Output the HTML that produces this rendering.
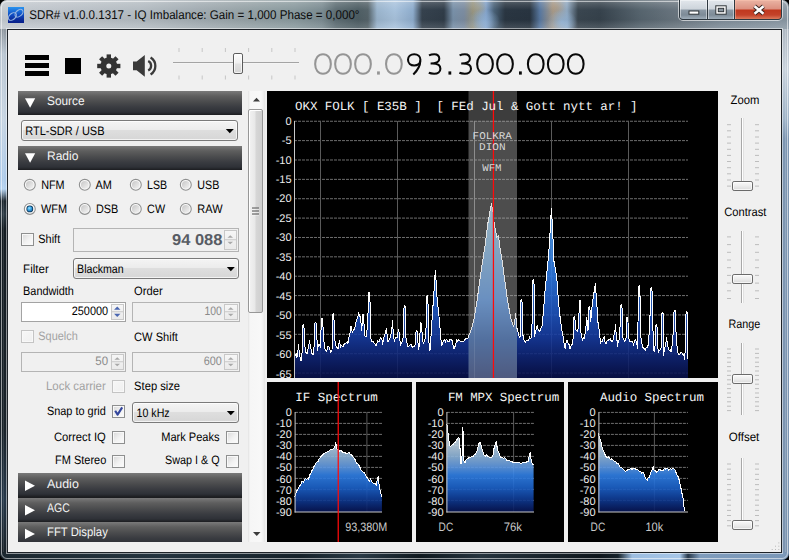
<!DOCTYPE html><html><head><meta charset="utf-8"><style>
html,body{margin:0;padding:0;background:#000;}
#r{position:relative;width:789px;height:560px;overflow:hidden;font-family:"Liberation Sans",sans-serif;}
#r>div{position:absolute;}
#r>div>div{position:absolute;}
svg{position:absolute;left:0;top:0;}
</style></head><body><div id="r">
<div style="left:0;top:0;width:789px;height:560px;border-radius:7px;overflow:hidden;background:#1b242c;"><div style="left:0px;top:0px;width:789px;height:29px;background:radial-gradient(ellipse 16px 12px at 484px 21px,rgba(150,184,222,.8),rgba(150,184,222,0)),radial-gradient(ellipse 10px 8px at 478px 8px,rgba(170,160,130,.5),rgba(170,160,130,0)),radial-gradient(ellipse 15px 12px at 562px 22px,rgba(150,186,224,.8),rgba(150,186,224,0)),radial-gradient(ellipse 9px 7px at 556px 7px,rgba(176,150,120,.5),rgba(176,150,120,0)),linear-gradient(90deg,#c4cad0 0px,#bec4ca 60px,#b4bcc2 140px,#a2acb2 200px,#98a4a8 240px,#8a9a9e 295px,#7c8c92 322px,#5e6e74 336px,#4e5e64 358px,#56646a 368px,#9ab4cc 377px,#a8c2dc 395px,#8eaccc 413px,#36424e 422px,#303c48 444px,#7890a8 453px,#7c8ca0 464px,#94927e 473px,#80a0c8 486px,#4a6278 494px,#2a3642 505px,#283440 530px,#5878a0 540px,#a49888 553px,#90a8c0 567px,#3a4650 578px,#36424c 600px,#56646e 640px,#6a7680 678px,#7c8a96 720px,#8a98a4 789px);"></div><div style="left:0px;top:0px;width:789px;height:29px;background:linear-gradient(180deg,rgba(255,255,255,.25) 0px,rgba(255,255,255,.12) 4px,rgba(255,255,255,.0) 10px,rgba(0,0,0,.04) 20px,rgba(255,255,255,.10) 27px);"></div><div style="left:0px;top:29px;width:7px;height:524px;background:linear-gradient(180deg,#8e969e 0px,#b9c6d2 25px,#c6d4e2 90px,#aecbea 150px,#b4d2f0 160px,#1c262e 172px,#2c3a44 185px,#141c22 200px,#1a232a 400px,#26384a 470px,#1a232a 520px);"></div><div style="left:782px;top:29px;width:7px;height:524px;background:linear-gradient(180deg,#aeb8c2 0px,#c8d2dc 40px,#9fb4c8 90px,#7d96b2 110px,#7b94b0 520px);"></div><div style="left:0px;top:553px;width:789px;height:7px;background:linear-gradient(90deg,#1c2830 0px,#24343f 160px,#16222a 300px,#2a3a46 360px,#101a20 420px,#26343e 480px,#0e161c 600px,#16222a 618px,#9cbde0 632px,#a6c6e8 680px,#27384a 688px,#7f9cbc 700px,#7b98b8 789px);"></div><div style="left:1px;top:1px;width:787px;height:558px;box-sizing:border-box;border:1px solid rgba(255,255,255,.55);border-radius:6px;"></div><div style="left:3px;top:29px;width:1px;height:523px;background:rgba(255,255,255,.12)"></div><div style="left:785px;top:29px;width:1px;height:523px;background:rgba(255,255,255,.18)"></div><div style="left:6px;top:28px;width:777px;height:526px;box-sizing:border-box;border:1px solid rgba(255,255,255,.5);"></div></div>
<div style="left:7px;top:29px;width:775px;height:524px;background:#1e2328;"></div>
<div style="left:8px;top:30px;width:773px;height:522px;background:#f0f0f0;"></div>
<div style="left:8px;top:7px;width:16px;height:16px;background:linear-gradient(180deg,#2a94f0,#0e4ac0 50%,#0a2a98 80%,#08208a);"></div>
<div style="left:678px;top:-1px;width:105px;height:22px;box-sizing:border-box;border:1px solid rgba(255,255,255,.6);border-top:none;border-radius:0 0 5px 5px;"></div>
<div style="left:679px;top:-1px;width:103px;height:21px;border:1px solid #2e3840;border-radius:0 0 4px 4px;box-sizing:border-box;overflow:hidden;background:#2e3840;"><div style="position:absolute;left:0;top:0;width:27px;height:20px;background:linear-gradient(180deg,#e2e7ec 0px,#cdd4db 9px,#8c99a5 10px,#7d8b97 15px,#a0aeba 19px);box-shadow:inset 0 0 0 1px rgba(255,255,255,.45);"></div><div style="position:absolute;left:28px;top:0;width:26px;height:20px;background:linear-gradient(180deg,#e2e7ec 0px,#cdd4db 9px,#8c99a5 10px,#7d8b97 15px,#a0aeba 19px);box-shadow:inset 0 0 0 1px rgba(255,255,255,.45);"></div><div style="position:absolute;left:55px;top:0;width:47px;height:20px;background:linear-gradient(180deg,#eab4a4 0px,#dc9080 9px,#c0381e 10px,#c4422a 15px,#dc7a5c 19px);box-shadow:inset 0 0 0 1px rgba(255,200,180,.45);"></div></div>
<div style="left:18px;top:91px;width:224px;height:24px;background:linear-gradient(180deg,#7a7a7a 0px,#5e5e5e 5px,#4a4b4d 11px,#3a3c41 16px,#2e3137 21px,#1c1d20 24px);"></div>
<div style="left:18px;top:146px;width:224px;height:24px;background:linear-gradient(180deg,#7a7a7a 0px,#5e5e5e 5px,#4a4b4d 11px,#3a3c41 16px,#2e3137 21px,#1c1d20 24px);"></div>
<div style="left:18px;top:473px;width:224px;height:24.6px;background:linear-gradient(180deg,#7a7a7a 0px,#5e5e5e 5px,#4a4b4d 11px,#3a3c41 16px,#2e3137 21px,#1c1d20 24px);"></div>
<div style="left:18px;top:497.6px;width:224px;height:24.4px;background:linear-gradient(180deg,#7a7a7a 0px,#5e5e5e 5px,#4a4b4d 11px,#3a3c41 16px,#2e3137 21px,#1c1d20 24px);"></div>
<div style="left:18px;top:522px;width:224px;height:20px;background:linear-gradient(180deg,#7a7a7a 0px,#5e5e5e 5px,#4a4b4d 11px,#3a3c41 16px,#2e3137 21px,#1c1d20 24px);background-size:100% 24px;"></div>
<div style="left:21px;top:120px;width:217px;height:21px;box-sizing:border-box;border:1px solid #7a7a7a;border-radius:3px;background:linear-gradient(180deg,#f4f4f4 0%,#ececec 45%,#dedede 50%,#d6d6d6 100%);box-shadow:inset 0 0 0 1px rgba(255,255,255,.7);"></div>
<div style="left:73px;top:258px;width:166px;height:21px;box-sizing:border-box;border:1px solid #7a7a7a;border-radius:3px;background:linear-gradient(180deg,#f4f4f4 0%,#ececec 45%,#dedede 50%,#d6d6d6 100%);box-shadow:inset 0 0 0 1px rgba(255,255,255,.7);"></div>
<div style="left:132px;top:402px;width:107px;height:21px;box-sizing:border-box;border:1px solid #7a7a7a;border-radius:3px;background:linear-gradient(180deg,#f4f4f4 0%,#ececec 45%,#dedede 50%,#d6d6d6 100%);box-shadow:inset 0 0 0 1px rgba(255,255,255,.7);"></div>
<div style="left:21px;top:233px;width:13px;height:13px;box-sizing:border-box;border:1px solid #8e8f8f;background:#f8f8f8;"></div>
<div style="left:23px;top:235px;width:9px;height:9px;background:linear-gradient(135deg,#dcdcdc 0%,#f2f2f2 55%,#fafafa 100%);"></div>
<div style="left:73px;top:228px;width:166px;height:23.5px;box-sizing:border-box;border:1px solid #b4b4b4;background:#f0f0f0;"></div>
<div style="left:223.5px;top:230px;width:13.5px;height:19.5px;box-sizing:border-box;border:1px solid #c8c8c8;background:linear-gradient(180deg,#f6f6f6,#eaeaea);"></div>
<div style="left:21px;top:302px;width:105px;height:19.5px;box-sizing:border-box;border:1px solid #a3a3a3;background:#ffffff;"></div>
<div style="left:110.5px;top:304px;width:13.5px;height:15.5px;box-sizing:border-box;border:1px solid #c8c8c8;background:linear-gradient(180deg,#f6f6f6,#eaeaea);"></div>
<div style="left:132px;top:302px;width:107.5px;height:19.5px;box-sizing:border-box;border:1px solid #b4b4b4;background:#f0f0f0;"></div>
<div style="left:224.0px;top:304px;width:13.5px;height:15.5px;box-sizing:border-box;border:1px solid #c8c8c8;background:linear-gradient(180deg,#f6f6f6,#eaeaea);"></div>
<div style="left:21px;top:330px;width:13px;height:13px;box-sizing:border-box;border:1px solid #c4c4c4;background:#f8f8f8;"></div>
<div style="left:23px;top:332px;width:9px;height:9px;background:linear-gradient(135deg,#f6f6f6,#f0f0f0);"></div>
<div style="left:21px;top:352px;width:105px;height:19.5px;box-sizing:border-box;border:1px solid #b4b4b4;background:#f0f0f0;"></div>
<div style="left:110.5px;top:354px;width:13.5px;height:15.5px;box-sizing:border-box;border:1px solid #c8c8c8;background:linear-gradient(180deg,#f6f6f6,#eaeaea);"></div>
<div style="left:132px;top:352px;width:107.5px;height:19.5px;box-sizing:border-box;border:1px solid #b4b4b4;background:#f0f0f0;"></div>
<div style="left:224.0px;top:354px;width:13.5px;height:15.5px;box-sizing:border-box;border:1px solid #c8c8c8;background:linear-gradient(180deg,#f6f6f6,#eaeaea);"></div>
<div style="left:112px;top:380px;width:13px;height:13px;box-sizing:border-box;border:1px solid #c4c4c4;background:#f8f8f8;"></div>
<div style="left:114px;top:382px;width:9px;height:9px;background:linear-gradient(135deg,#f6f6f6,#f0f0f0);"></div>
<div style="left:112px;top:405px;width:13px;height:13px;box-sizing:border-box;border:1px solid #8e8f8f;background:#f8f8f8;"></div>
<div style="left:114px;top:407px;width:9px;height:9px;background:linear-gradient(135deg,#dcdcdc 0%,#f2f2f2 55%,#fafafa 100%);"></div>
<div style="left:112px;top:431px;width:13px;height:13px;box-sizing:border-box;border:1px solid #8e8f8f;background:#f8f8f8;"></div>
<div style="left:114px;top:433px;width:9px;height:9px;background:linear-gradient(135deg,#dcdcdc 0%,#f2f2f2 55%,#fafafa 100%);"></div>
<div style="left:226px;top:431px;width:13px;height:13px;box-sizing:border-box;border:1px solid #8e8f8f;background:#f8f8f8;"></div>
<div style="left:228px;top:433px;width:9px;height:9px;background:linear-gradient(135deg,#dcdcdc 0%,#f2f2f2 55%,#fafafa 100%);"></div>
<div style="left:112px;top:455px;width:13px;height:13px;box-sizing:border-box;border:1px solid #8e8f8f;background:#f8f8f8;"></div>
<div style="left:114px;top:457px;width:9px;height:9px;background:linear-gradient(135deg,#dcdcdc 0%,#f2f2f2 55%,#fafafa 100%);"></div>
<div style="left:226px;top:455px;width:13px;height:13px;box-sizing:border-box;border:1px solid #8e8f8f;background:#f8f8f8;"></div>
<div style="left:228px;top:457px;width:9px;height:9px;background:linear-gradient(135deg,#dcdcdc 0%,#f2f2f2 55%,#fafafa 100%);"></div>
<div style="left:248px;top:91px;width:17px;height:451px;background:#f0f0f0;"></div>
<div style="left:248px;top:91px;width:17px;height:451px;background:linear-gradient(90deg,#e2e2e2 0px,#f6f6f6 2px,#f8f8f8 13px,#ececec 16px,#e4e4e4 17px);"></div>
<div style="left:248px;top:109px;width:15px;height:204px;box-sizing:border-box;border:1px solid #979797;border-radius:2px;background:linear-gradient(90deg,#f2f2f2 0%,#e8e8e8 45%,#d6d6d6 55%,#cfcfcf 100%);box-shadow:inset 1px 1px 0 #fff;"></div>
<div style="left:267px;top:91px;width:451px;height:287px;background:#000;"></div>
<div style="left:267px;top:382px;width:145px;height:160px;background:#000;"></div>
<div style="left:416px;top:382px;width:148px;height:160px;background:#000;"></div>
<div style="left:568px;top:382px;width:150px;height:160px;background:#000;"></div>
<svg width="789" height="560" viewBox="0 0 789 560" text-rendering="geometricPrecision">
<ellipse cx="12.4" cy="16.5" rx="4.6" ry="3.0" transform="rotate(-42 12.4 16.5)" stroke="#98b6e0" stroke-width="1.1" fill="none"/>
<ellipse cx="19.0" cy="13.2" rx="4.6" ry="3.0" transform="rotate(-42 19.0 13.2)" stroke="#98b6e0" stroke-width="1.1" fill="none"/>
<text xml:space="preserve" x="29.30" y="18.75" font-family="Liberation Sans" font-size="12.6" fill="#0c0c0c" font-weight="normal" text-anchor="start" textLength="330.20" lengthAdjust="spacingAndGlyphs" >SDR# v1.0.0.1317 - IQ Imbalance: Gain = 1,000 Phase = 0,000°</text>
<rect x="689" y="11" width="9.8" height="3.2" fill="#fff" stroke="#2e3438" stroke-width="1"/>
<rect x="715.8" y="5.8" width="10.4" height="8.4" fill="#fff" stroke="#2e3438" stroke-width="1"/>
<rect x="718.3" y="8.3" width="5.4" height="3.4" fill="#8a96a0" stroke="#2e3438" stroke-width="1"/>
<path d="M754.5,6.3 L763.5,13.7 M763.5,6.3 L754.5,13.7" stroke="#3a2420" stroke-width="4.4"/>
<path d="M754.5,6.3 L763.5,13.7 M763.5,6.3 L754.5,13.7" stroke="#fff" stroke-width="2.5"/>
<rect x="25" y="55" width="24" height="5" fill="#000"/><rect x="25" y="63" width="24" height="5" fill="#000"/><rect x="25" y="71" width="24" height="5" fill="#000"/>
<rect x="65" y="58" width="16" height="16" fill="#000"/>
<circle cx="108.8" cy="66.0" r="8.4" fill="#333"/><rect x="106.6" y="54.4" width="4.4" height="6" fill="#333" transform="rotate(0 108.8 66.0)"/><rect x="106.6" y="54.4" width="4.4" height="6" fill="#333" transform="rotate(45 108.8 66.0)"/><rect x="106.6" y="54.4" width="4.4" height="6" fill="#333" transform="rotate(90 108.8 66.0)"/><rect x="106.6" y="54.4" width="4.4" height="6" fill="#333" transform="rotate(135 108.8 66.0)"/><rect x="106.6" y="54.4" width="4.4" height="6" fill="#333" transform="rotate(180 108.8 66.0)"/><rect x="106.6" y="54.4" width="4.4" height="6" fill="#333" transform="rotate(225 108.8 66.0)"/><rect x="106.6" y="54.4" width="4.4" height="6" fill="#333" transform="rotate(270 108.8 66.0)"/><rect x="106.6" y="54.4" width="4.4" height="6" fill="#333" transform="rotate(315 108.8 66.0)"/><circle cx="108.8" cy="66.0" r="2.5" fill="#f0f0f0"/>
<path d="M133,61.5 L136.6,61.5 L144.8,54.9 L144.8,76.8 L136.6,70.2 L133,70.2 Z" fill="#3a3a3a"/>
<path d="M148.2,60.9 A5.4,5.4 0 0 1 148.2,70.5" stroke="#3a3a3a" stroke-width="2.3" fill="none"/>
<path d="M150.6,57.6 A10.0,10.0 0 0 1 150.6,74.6" stroke="#3a3a3a" stroke-width="2.3" fill="none"/>
<rect x="173" y="62" width="126" height="1.2" fill="#a4a4a4"/><rect x="173" y="63.2" width="126" height="0.8" fill="#fff" opacity=".8"/>
<rect x="178.5" y="48" width="1" height="4" fill="#c6c6c6"/><rect x="178.5" y="75.5" width="1" height="4" fill="#c6c6c6"/>
<rect x="201.7" y="48" width="1" height="4" fill="#c6c6c6"/><rect x="201.7" y="75.5" width="1" height="4" fill="#c6c6c6"/>
<rect x="224.9" y="48" width="1" height="4" fill="#c6c6c6"/><rect x="224.9" y="75.5" width="1" height="4" fill="#c6c6c6"/>
<rect x="248.1" y="48" width="1" height="4" fill="#c6c6c6"/><rect x="248.1" y="75.5" width="1" height="4" fill="#c6c6c6"/>
<rect x="271.3" y="48" width="1" height="4" fill="#c6c6c6"/><rect x="271.3" y="75.5" width="1" height="4" fill="#c6c6c6"/>
<rect x="294.5" y="48" width="1" height="4" fill="#c6c6c6"/><rect x="294.5" y="75.5" width="1" height="4" fill="#c6c6c6"/>
<defs><linearGradient id="thv" x1="0" y1="0" x2="0" y2="1"><stop offset="0" stop-color="#fbfbfb"/><stop offset="0.5" stop-color="#ececec"/><stop offset="1" stop-color="#d8d8d8"/></linearGradient><linearGradient id="thh" x1="0" y1="0" x2="0" y2="1"><stop offset="0" stop-color="#fdfdfd"/><stop offset="0.45" stop-color="#f0f0f0"/><stop offset="0.55" stop-color="#e0e0e0"/><stop offset="1" stop-color="#d4d4d4"/></linearGradient></defs>
<rect x="233.5" y="53.5" width="9" height="20" rx="1.6" fill="url(#thh)" stroke="#5a5a5a" stroke-width="1"/><rect x="234.5" y="54.5" width="7" height="18" rx="1" fill="none" stroke="#fff" stroke-opacity=".7" stroke-width="1"/>
<path d="M323.0,54.2 C327.71,54.2 330.85,58.1 330.85,63.95 C330.85,69.8 327.71,73.7 323.0,73.7 C318.29,73.7 315.15,69.8 315.15,63.95 C315.15,58.1 318.29,54.2 323.0,54.2 Z" fill="none" stroke="#959595" stroke-width="2.05"/>
<path d="M343.0,54.2 C347.71,54.2 350.85,58.1 350.85,63.95 C350.85,69.8 347.71,73.7 343.0,73.7 C338.29,73.7 335.15,69.8 335.15,63.95 C335.15,58.1 338.29,54.2 343.0,54.2 Z" fill="none" stroke="#959595" stroke-width="2.05"/>
<path d="M363.0,54.2 C367.71,54.2 370.85,58.1 370.85,63.95 C370.85,69.8 367.71,73.7 363.0,73.7 C358.29,73.7 355.15,69.8 355.15,63.95 C355.15,58.1 358.29,54.2 363.0,54.2 Z" fill="none" stroke="#959595" stroke-width="2.05"/>
<rect x="377.05" y="71.4" width="2.8" height="3.2" fill="#959595"/>
<path d="M393.9,54.2 C398.60999999999996,54.2 401.75,58.1 401.75,63.95 C401.75,69.8 398.60999999999996,73.7 393.9,73.7 C389.19,73.7 386.04999999999995,69.8 386.04999999999995,63.95 C386.04999999999995,58.1 389.19,54.2 393.9,54.2 Z" fill="none" stroke="#959595" stroke-width="2.05"/>
<path d="M414.2,54.2 C417.796,54.2 420.4,56.573 420.4,59.85 C420.4,63.127 417.796,65.5 414.2,65.5 C410.604,65.5 408.0,63.127 408.0,59.85 C408.0,56.573 410.604,54.2 414.2,54.2 Z" fill="none" stroke="#080808" stroke-width="2.05"/>
<path d="M420.34999999999997,60.6 C420.2,66.2 417.4,70.6 413.3,74.4" fill="none" stroke="#080808" stroke-width="2.05"/>
<path d="M429.00,55.4 C430.80,54.5 432.60,54.2 434.30,54.2 C437.60,54.2 439.30,56.1 439.30,58.8 C439.30,61.7 437.00,63.55 430.60,63.55 M432.50,63.55 C438.10,63.55 440.40,65.6 440.40,68.7 C440.40,71.8 437.80,73.7 434.20,73.7 C432.00,73.7 430.20,73.4 428.80,72.8" fill="none" stroke="#080808" stroke-width="2.05"/>
<rect x="448.45" y="71.4" width="2.8" height="3.2" fill="#080808"/>
<path d="M459.60,55.4 C461.40,54.5 463.20,54.2 464.90,54.2 C468.20,54.2 469.90,56.1 469.90,58.8 C469.90,61.7 467.60,63.55 461.20,63.55 M463.10,63.55 C468.70,63.55 471.00,65.6 471.00,68.7 C471.00,71.8 468.40,73.7 464.80,73.7 C462.60,73.7 460.80,73.4 459.40,72.8" fill="none" stroke="#080808" stroke-width="2.05"/>
<path d="M485.0,54.2 C489.71,54.2 492.85,58.1 492.85,63.95 C492.85,69.8 489.71,73.7 485.0,73.7 C480.29,73.7 477.15,69.8 477.15,63.95 C477.15,58.1 480.29,54.2 485.0,54.2 Z" fill="none" stroke="#080808" stroke-width="2.05"/>
<path d="M505.0,54.2 C509.71,54.2 512.85,58.1 512.85,63.95 C512.85,69.8 509.71,73.7 505.0,73.7 C500.29,73.7 497.15,69.8 497.15,63.95 C497.15,58.1 500.29,54.2 505.0,54.2 Z" fill="none" stroke="#080808" stroke-width="2.05"/>
<rect x="519.0" y="71.4" width="2.8" height="3.2" fill="#080808"/>
<path d="M535.75,54.2 C540.46,54.2 543.6,58.1 543.6,63.95 C543.6,69.8 540.46,73.7 535.75,73.7 C531.04,73.7 527.9,69.8 527.9,63.95 C527.9,58.1 531.04,54.2 535.75,54.2 Z" fill="none" stroke="#080808" stroke-width="2.05"/>
<path d="M555.75,54.2 C560.46,54.2 563.6,58.1 563.6,63.95 C563.6,69.8 560.46,73.7 555.75,73.7 C551.04,73.7 547.9,69.8 547.9,63.95 C547.9,58.1 551.04,54.2 555.75,54.2 Z" fill="none" stroke="#080808" stroke-width="2.05"/>
<path d="M575.75,54.2 C580.46,54.2 583.6,58.1 583.6,63.95 C583.6,69.8 580.46,73.7 575.75,73.7 C571.04,73.7 567.9,69.8 567.9,63.95 C567.9,58.1 571.04,54.2 575.75,54.2 Z" fill="none" stroke="#080808" stroke-width="2.05"/>
<path d="M25,98.3 L35.2,98.3 L30.1,107.8 Z" fill="#fff"/>
<text xml:space="preserve" x="47.00" y="105.00" font-family="Liberation Sans" font-size="12.4" fill="#f4f4f4" font-weight="normal" text-anchor="start" textLength="37.60" lengthAdjust="spacingAndGlyphs" >Source</text>
<path d="M25,153.3 L35.2,153.3 L30.1,162.8 Z" fill="#fff"/>
<text xml:space="preserve" x="47.00" y="159.70" font-family="Liberation Sans" font-size="12.4" fill="#f4f4f4" font-weight="normal" text-anchor="start" textLength="31.40" lengthAdjust="spacingAndGlyphs" >Radio</text>
<path d="M25,480.5 L35,485.7 L25,490.9 Z" fill="#fff"/>
<text xml:space="preserve" x="47.00" y="487.90" font-family="Liberation Sans" font-size="12.4" fill="#f4f4f4" font-weight="normal" text-anchor="start" textLength="31.80" lengthAdjust="spacingAndGlyphs" >Audio</text>
<path d="M25,505.1 L35,510.3 L25,515.5 Z" fill="#fff"/>
<text xml:space="preserve" x="47.00" y="511.90" font-family="Liberation Sans" font-size="12.4" fill="#f4f4f4" font-weight="normal" text-anchor="start" textLength="22.80" lengthAdjust="spacingAndGlyphs" >AGC</text>
<path d="M25,528.7 L35,533.9 L25,539.1 Z" fill="#fff"/>
<text xml:space="preserve" x="47.00" y="535.70" font-family="Liberation Sans" font-size="12.4" fill="#f4f4f4" font-weight="normal" text-anchor="start" textLength="60.80" lengthAdjust="spacingAndGlyphs" >FFT Display</text>
<path d="M225.8,128.9 L233.8,128.9 L229.8,133.20000000000002 Z" fill="#000"/>
<text xml:space="preserve" x="25.30" y="135.00" font-family="Liberation Sans" font-size="12.2" fill="#000" font-weight="normal" text-anchor="start" textLength="79.20" lengthAdjust="spacingAndGlyphs" >RTL-SDR / USB</text>
<path d="M226.8,266.9 L234.8,266.9 L230.8,271.2 Z" fill="#000"/>
<text xml:space="preserve" x="77.10" y="272.60" font-family="Liberation Sans" font-size="12.2" fill="#000" font-weight="normal" text-anchor="start" textLength="46.50" lengthAdjust="spacingAndGlyphs" >Blackman</text>
<path d="M226.8,410.9 L234.8,410.9 L230.8,415.2 Z" fill="#000"/>
<text xml:space="preserve" x="136.60" y="417.00" font-family="Liberation Sans" font-size="12.2" fill="#000" font-weight="normal" text-anchor="start" textLength="33.00" lengthAdjust="spacingAndGlyphs" >10 kHz</text>
<defs><linearGradient id="runs" x1="0" y1="0" x2="1" y2="1"><stop offset="0" stop-color="#c6c6c6"/><stop offset="1" stop-color="#f4f4f4"/></linearGradient><radialGradient id="rsel" cx="0.4" cy="0.35" r="0.7"><stop offset="0" stop-color="#a0e4ff"/><stop offset="0.5" stop-color="#3aa6e6"/><stop offset="1" stop-color="#1a6aaa"/></radialGradient></defs>
<circle cx="29.799999999999997" cy="184.8" r="5.45" fill="#fbfbfb" stroke="#8f9090" stroke-width="1.1"/>
<circle cx="29.799999999999997" cy="184.8" r="3.9" fill="url(#runs)"/>
<text xml:space="preserve" x="41.20" y="189.00" font-family="Liberation Sans" font-size="12.2" fill="#000" font-weight="normal" text-anchor="start" textLength="23.40" lengthAdjust="spacingAndGlyphs" >NFM</text>
<circle cx="84.80000000000001" cy="184.8" r="5.45" fill="#fbfbfb" stroke="#8f9090" stroke-width="1.1"/>
<circle cx="84.80000000000001" cy="184.8" r="3.9" fill="url(#runs)"/>
<text xml:space="preserve" x="95.60" y="189.00" font-family="Liberation Sans" font-size="12.2" fill="#000" font-weight="normal" text-anchor="start" textLength="16.30" lengthAdjust="spacingAndGlyphs" >AM</text>
<circle cx="135.8" cy="184.8" r="5.45" fill="#fbfbfb" stroke="#8f9090" stroke-width="1.1"/>
<circle cx="135.8" cy="184.8" r="3.9" fill="url(#runs)"/>
<text xml:space="preserve" x="147.10" y="189.00" font-family="Liberation Sans" font-size="12.2" fill="#000" font-weight="normal" text-anchor="start" textLength="20.00" lengthAdjust="spacingAndGlyphs" >LSB</text>
<circle cx="185.8" cy="184.8" r="5.45" fill="#fbfbfb" stroke="#8f9090" stroke-width="1.1"/>
<circle cx="185.8" cy="184.8" r="3.9" fill="url(#runs)"/>
<text xml:space="preserve" x="197.30" y="189.00" font-family="Liberation Sans" font-size="12.2" fill="#000" font-weight="normal" text-anchor="start" textLength="22.00" lengthAdjust="spacingAndGlyphs" >USB</text>
<circle cx="29.799999999999997" cy="208.9" r="5.45" fill="#fbfbfb" stroke="#8f9090" stroke-width="1.1"/>
<circle cx="29.799999999999997" cy="208.9" r="3.4" fill="#0d3454"/><circle cx="29.799999999999997" cy="208.9" r="2.6" fill="url(#rsel)"/>
<text xml:space="preserve" x="40.90" y="212.60" font-family="Liberation Sans" font-size="12.2" fill="#000" font-weight="normal" text-anchor="start" textLength="26.10" lengthAdjust="spacingAndGlyphs" >WFM</text>
<circle cx="84.80000000000001" cy="208.9" r="5.45" fill="#fbfbfb" stroke="#8f9090" stroke-width="1.1"/>
<circle cx="84.80000000000001" cy="208.9" r="3.9" fill="url(#runs)"/>
<text xml:space="preserve" x="96.00" y="212.60" font-family="Liberation Sans" font-size="12.2" fill="#000" font-weight="normal" text-anchor="start" textLength="22.30" lengthAdjust="spacingAndGlyphs" >DSB</text>
<circle cx="135.8" cy="208.9" r="5.45" fill="#fbfbfb" stroke="#8f9090" stroke-width="1.1"/>
<circle cx="135.8" cy="208.9" r="3.9" fill="url(#runs)"/>
<text xml:space="preserve" x="147.10" y="212.60" font-family="Liberation Sans" font-size="12.2" fill="#000" font-weight="normal" text-anchor="start" textLength="18.00" lengthAdjust="spacingAndGlyphs" >CW</text>
<circle cx="185.8" cy="208.9" r="5.45" fill="#fbfbfb" stroke="#8f9090" stroke-width="1.1"/>
<circle cx="185.8" cy="208.9" r="3.9" fill="url(#runs)"/>
<text xml:space="preserve" x="197.30" y="212.60" font-family="Liberation Sans" font-size="12.2" fill="#000" font-weight="normal" text-anchor="start" textLength="25.20" lengthAdjust="spacingAndGlyphs" >RAW</text>
<text xml:space="preserve" x="38.30" y="242.80" font-family="Liberation Sans" font-size="12.2" fill="#000" font-weight="normal" text-anchor="start" textLength="21.90" lengthAdjust="spacingAndGlyphs" >Shift</text>
<rect x="224.5" y="239.25" width="11.5" height="1" fill="#c8c8c8"/>
<path d="M227.45,237.75 L233.05,237.75 L230.25,235.15 Z" fill="#a8a8a8"/>
<path d="M227.45,241.75 L233.05,241.75 L230.25,244.35 Z" fill="#a8a8a8"/>
<text xml:space="preserve" x="172.00" y="244.80" font-family="Liberation Sans" font-size="15.8" fill="#585c64" font-weight="bold" text-anchor="start" textLength="50.40" lengthAdjust="spacingAndGlyphs" >94 088</text>
<text xml:space="preserve" x="23.10" y="272.60" font-family="Liberation Sans" font-size="12.2" fill="#000" font-weight="normal" text-anchor="start" textLength="25.70" lengthAdjust="spacingAndGlyphs" >Filter</text>
<text xml:space="preserve" x="23.10" y="294.90" font-family="Liberation Sans" font-size="12.2" fill="#000" font-weight="normal" text-anchor="start" textLength="50.80" lengthAdjust="spacingAndGlyphs" >Bandwidth</text>
<text xml:space="preserve" x="134.10" y="294.90" font-family="Liberation Sans" font-size="12.2" fill="#000" font-weight="normal" text-anchor="start" textLength="28.50" lengthAdjust="spacingAndGlyphs" >Order</text>
<rect x="111.5" y="311.25" width="11.5" height="1" fill="#c8c8c8"/>
<path d="M114.05,309.75 L120.45,309.75 L117.25,306.55 Z" fill="#4a66b0"/>
<path d="M114.05,313.75 L120.45,313.75 L117.25,316.95 Z" fill="#4a66b0"/>
<text xml:space="preserve" x="71.70" y="314.70" font-family="Liberation Sans" font-size="12.2" fill="#000" font-weight="normal" text-anchor="start" textLength="36.40" lengthAdjust="spacingAndGlyphs" >250000</text>
<rect x="225.0" y="311.25" width="11.5" height="1" fill="#c8c8c8"/>
<path d="M227.95,309.75 L233.55,309.75 L230.75,307.15 Z" fill="#a8a8a8"/>
<path d="M227.95,313.75 L233.55,313.75 L230.75,316.35 Z" fill="#a8a8a8"/>
<text xml:space="preserve" x="204.50" y="314.70" font-family="Liberation Sans" font-size="12.2" fill="#8a8a8a" font-weight="normal" text-anchor="start" textLength="17.40" lengthAdjust="spacingAndGlyphs" >100</text>
<text xml:space="preserve" x="38.30" y="340.20" font-family="Liberation Sans" font-size="12.2" fill="#a2a2a2" font-weight="normal" text-anchor="start" textLength="39.40" lengthAdjust="spacingAndGlyphs" >Squelch</text>
<text xml:space="preserve" x="134.10" y="340.70" font-family="Liberation Sans" font-size="12.2" fill="#000" font-weight="normal" text-anchor="start" textLength="43.70" lengthAdjust="spacingAndGlyphs" >CW Shift</text>
<rect x="111.5" y="361.25" width="11.5" height="1" fill="#c8c8c8"/>
<path d="M114.45,359.75 L120.05,359.75 L117.25,357.15 Z" fill="#a8a8a8"/>
<path d="M114.45,363.75 L120.05,363.75 L117.25,366.35 Z" fill="#a8a8a8"/>
<text xml:space="preserve" x="95.30" y="364.80" font-family="Liberation Sans" font-size="12.2" fill="#8a8a8a" font-weight="normal" text-anchor="start" textLength="12.80" lengthAdjust="spacingAndGlyphs" >50</text>
<rect x="225.0" y="361.25" width="11.5" height="1" fill="#c8c8c8"/>
<path d="M227.95,359.75 L233.55,359.75 L230.75,357.15 Z" fill="#a8a8a8"/>
<path d="M227.95,363.75 L233.55,363.75 L230.75,366.35 Z" fill="#a8a8a8"/>
<text xml:space="preserve" x="203.80" y="364.80" font-family="Liberation Sans" font-size="12.2" fill="#8a8a8a" font-weight="normal" text-anchor="start" textLength="18.10" lengthAdjust="spacingAndGlyphs" >600</text>
<text xml:space="preserve" x="45.90" y="389.60" font-family="Liberation Sans" font-size="12.2" fill="#a2a2a2" font-weight="normal" text-anchor="start" textLength="59.90" lengthAdjust="spacingAndGlyphs" >Lock carrier</text>
<text xml:space="preserve" x="134.10" y="390.40" font-family="Liberation Sans" font-size="12.2" fill="#000" font-weight="normal" text-anchor="start" textLength="46.00" lengthAdjust="spacingAndGlyphs" >Step size</text>
<text xml:space="preserve" x="46.90" y="414.80" font-family="Liberation Sans" font-size="12.2" fill="#000" font-weight="normal" text-anchor="start" textLength="58.90" lengthAdjust="spacingAndGlyphs" >Snap to grid</text>
<path d="M115.2,410.8 L117.6,414.6 L122.2,407.4" stroke="#34469c" stroke-width="2.1" fill="none" stroke-linejoin="round"/>
<text xml:space="preserve" x="53.90" y="440.60" font-family="Liberation Sans" font-size="12.2" fill="#000" font-weight="normal" text-anchor="start" textLength="51.90" lengthAdjust="spacingAndGlyphs" >Correct IQ</text>
<text xml:space="preserve" x="161.20" y="440.60" font-family="Liberation Sans" font-size="12.2" fill="#000" font-weight="normal" text-anchor="start" textLength="58.40" lengthAdjust="spacingAndGlyphs" >Mark Peaks</text>
<text xml:space="preserve" x="55.00" y="464.20" font-family="Liberation Sans" font-size="12.2" fill="#000" font-weight="normal" text-anchor="start" textLength="51.30" lengthAdjust="spacingAndGlyphs" >FM Stereo</text>
<text xml:space="preserve" x="165.00" y="464.20" font-family="Liberation Sans" font-size="12.2" fill="#000" font-weight="normal" text-anchor="start" textLength="54.60" lengthAdjust="spacingAndGlyphs" >Swap I &amp; Q</text>
<path d="M253,101.5 L260,101.5 L256.5,97.8 Z" fill="#3c3c3c"/>
<path d="M253,532 L260.5,532 L256.75,536 Z" fill="#3c3c3c"/>
<rect x="252" y="207.5" width="7" height="1.2" fill="#555"/><rect x="252" y="208.7" width="7" height="0.8" fill="#fff" opacity=".7"/>
<rect x="252" y="210.5" width="7" height="1.2" fill="#555"/><rect x="252" y="211.7" width="7" height="0.8" fill="#fff" opacity=".7"/>
<rect x="252" y="213.5" width="7" height="1.2" fill="#555"/><rect x="252" y="214.7" width="7" height="0.8" fill="#fff" opacity=".7"/>
<defs>
<linearGradient id="gm" x1="0" y1="121" x2="0" y2="378" gradientUnits="userSpaceOnUse">
<stop offset="0" stop-color="#e4ecf4"/><stop offset="0.30" stop-color="#84b2e4"/><stop offset="0.45" stop-color="#4490e6"/>
<stop offset="0.60" stop-color="#2e7ae4"/><stop offset="0.74" stop-color="#2058c4"/><stop offset="0.84" stop-color="#173ca2"/><stop offset="0.92" stop-color="#0f2576"/><stop offset="1" stop-color="#08104a"/></linearGradient>
<linearGradient id="gs" x1="0" y1="412" x2="0" y2="512" gradientUnits="userSpaceOnUse">
<stop offset="0" stop-color="#ffffff"/><stop offset="0.33" stop-color="#bbd1e3"/><stop offset="0.44" stop-color="#90b6da"/><stop offset="0.54" stop-color="#649ce3"/><stop offset="0.63" stop-color="#3181e7"/><stop offset="0.75" stop-color="#1d64cc"/><stop offset="0.86" stop-color="#10409c"/><stop offset="0.97" stop-color="#091d62"/><stop offset="1.0" stop-color="#071654"/>
</linearGradient>
</defs>
<path d="M294,121.25 H688 M294,140.62 H688 M294,159.99 H688 M294,179.36 H688 M294,198.73 H688 M294,218.10 H688 M294,237.47 H688 M294,256.84 H688 M294,276.21 H688 M294,295.58 H688 M294,314.95 H688 M294,334.32 H688 M294,353.69 H688 M294,373.06 H688" stroke="#6e6e6e" stroke-width="1" stroke-dasharray="3 1" fill="none"/>
<path d="M320.5,121 V378 M397.5,121 V378 M474.5,121 V378 M551.5,121 V378 M628.5,121 V378" stroke="#5a5a5a" stroke-width="1" fill="none"/>
<polygon points="294.50,356.00 295.50,355.70 296.20,354.00 297.00,357.50 298.00,350.18 298.60,346.80 299.80,355.70 301.00,361.00 302.10,352.00 302.85,325.10 303.40,324.50 303.95,325.10 304.30,341.00 305.70,352.00 307.00,354.00 308.40,346.80 309.60,342.00 311.00,348.60 312.30,354.80 313.60,354.00 314.60,337.90 314.95,323.30 315.50,322.70 316.05,323.30 316.80,337.90 317.70,348.60 318.60,345.00 319.60,344.74 320.40,346.80 321.45,318.80 322.00,318.20 322.55,318.80 323.60,337.90 324.80,348.60 325.80,350.48 326.60,351.00 327.90,346.80 328.90,346.55 329.30,348.60 330.70,352.00 332.00,350.40 332.75,314.35 333.30,313.75 333.85,314.35 334.50,337.90 335.50,343.11 336.25,346.80 337.25,347.35 338.00,348.60 339.30,341.40 340.70,346.80 341.70,345.21 342.70,346.83 343.40,346.80 344.40,343.13 345.20,343.20 346.20,342.96 347.20,341.65 347.90,343.20 348.90,337.49 349.60,336.00 351.00,326.25 352.30,332.50 353.30,330.19 354.30,329.60 355.00,327.00 356.00,321.76 356.80,320.00 357.80,316.53 358.60,313.75 360.00,316.40 361.00,323.35 361.80,330.70 362.45,315.20 363.00,314.60 363.55,315.20 364.50,333.43 364.80,336.00 365.80,336.46 366.60,336.00 367.90,316.40 368.75,292.90 369.30,292.30 369.85,292.90 370.70,337.90 371.70,341.10 372.90,341.40 373.90,343.06 374.90,343.80 375.50,345.00 376.50,345.38 377.50,340.70 378.20,341.40 379.20,341.39 380.20,338.05 380.90,337.90 381.90,339.56 382.70,343.20 383.70,337.82 384.70,334.51 385.70,332.34 386.25,329.00 387.25,334.94 388.00,341.40 389.00,339.69 390.00,337.90 390.70,336.00 391.70,328.65 392.50,323.60 393.50,333.66 394.30,341.40 395.30,338.53 396.30,337.22 397.00,337.90 398.00,332.21 398.75,329.80 399.75,339.14 400.50,345.00 401.50,342.74 402.30,341.40 403.10,337.12 404.05,306.30 404.60,305.70 405.15,306.30 405.90,337.90 406.90,342.18 407.70,346.80 408.70,346.44 409.70,345.30 410.40,345.00 411.40,344.97 412.40,347.44 413.00,346.80 414.00,346.60 415.10,344.87 416.05,331.30 416.60,330.70 417.15,331.30 418.40,348.60 419.50,345.49 420.45,323.30 421.00,322.70 421.55,323.30 422.50,340.74 423.75,343.20 424.75,339.51 425.80,337.52 426.75,296.50 427.30,295.90 427.85,296.50 428.75,341.40 430.00,350.40 431.00,335.78 431.80,323.60 432.80,308.71 433.60,296.80 434.60,281.69 435.40,269.60 436.40,286.60 437.00,296.80 438.00,306.60 439.00,316.40 440.00,327.49 441.00,339.75 441.60,345.00 442.60,343.83 443.60,340.24 444.30,339.60 445.30,341.83 446.30,339.23 447.30,340.81 447.90,341.40 448.90,341.81 449.90,339.12 450.90,339.82 451.40,339.60 452.40,341.27 453.40,346.87 454.10,348.60 455.10,346.22 456.10,342.20 456.80,339.60 457.80,341.30 458.80,339.62 460.00,340.70 461.00,341.85 462.00,341.94 462.90,342.00 463.90,341.13 464.90,339.53 465.50,339.00 466.50,338.56 467.50,338.12 468.00,337.90 469.00,335.37 470.00,332.84 471.40,329.30 472.40,325.37 473.40,321.44 474.30,317.90 475.30,311.51 476.30,305.11 477.10,300.00 478.10,292.87 479.10,285.73 480.10,278.60 481.10,271.47 481.60,267.90 482.60,261.43 483.60,254.96 484.60,248.48 485.20,244.60 486.20,236.67 487.20,228.75 487.90,223.20 488.90,217.25 490.00,210.70 491.40,205.00 492.40,208.80 492.90,210.70 494.10,223.20 495.10,228.50 496.10,233.79 496.80,237.50 497.80,236.50 498.60,235.70 499.50,244.60 500.50,250.79 501.50,256.98 502.10,260.70 503.10,268.00 504.10,275.29 504.80,280.40 505.80,287.66 506.80,294.92 507.50,300.00 508.60,306.40 509.60,311.51 510.60,316.61 511.40,320.70 512.40,323.18 513.70,326.40 514.70,320.70 515.70,315.00 517.10,329.30 518.10,332.27 519.10,336.45 520.00,337.90 520.85,299.90 521.40,299.30 521.95,299.90 522.90,335.00 524.30,341.40 525.30,342.68 526.30,340.66 527.30,341.01 528.60,340.00 529.60,337.35 530.60,338.58 531.40,337.00 531.90,330.16 532.85,280.60 533.40,280.00 533.95,280.60 534.90,334.30 535.90,330.92 537.10,325.70 538.10,329.44 539.10,330.79 540.00,331.40 541.00,327.92 542.00,326.00 543.40,312.50 544.70,293.80 546.10,280.40 547.40,267.00 548.75,253.60 550.10,232.00 551.40,208.00 552.80,232.00 553.60,259.00 554.60,264.89 555.40,269.60 556.80,277.70 558.10,296.40 559.50,312.50 560.50,320.17 561.60,328.60 562.60,333.82 563.50,339.30 564.50,345.72 565.10,348.60 566.10,342.58 567.10,340.00 568.10,342.83 569.10,344.74 570.00,348.60 571.00,345.87 572.00,344.30 572.80,344.81 573.75,317.60 574.30,317.00 574.85,317.60 575.80,329.67 577.10,331.40 578.50,327.68 579.45,301.00 580.00,300.40 580.55,301.00 580.90,332.50 581.90,337.41 582.70,339.60 583.70,337.32 584.50,337.90 585.70,329.00 586.80,317.30 588.00,330.70 588.75,307.20 589.30,306.60 589.85,307.20 590.70,321.80 592.10,305.70 593.10,298.76 593.90,293.20 595.20,285.20 596.40,296.80 597.40,313.47 597.90,321.80 599.30,330.70 600.50,343.20 601.50,341.29 602.30,341.40 603.30,338.56 604.10,337.00 605.10,342.28 605.90,344.10 606.90,340.92 607.90,340.58 608.60,339.60 609.60,339.31 610.40,338.75 611.40,341.69 612.10,341.40 613.10,339.55 613.90,336.00 614.90,331.31 615.40,327.00 616.40,334.77 617.50,345.00 618.50,341.31 619.60,337.90 620.85,305.40 621.40,304.80 621.95,305.40 622.90,337.90 623.90,339.45 624.60,341.40 625.60,340.45 626.10,337.90 626.75,317.90 627.30,317.30 627.85,317.90 628.60,337.90 629.60,341.07 630.90,341.40 631.90,341.48 632.90,342.90 633.60,345.00 634.60,341.04 635.40,339.60 636.40,342.07 637.50,346.80 638.75,286.60 639.30,286.00 639.85,286.60 640.70,336.00 641.70,341.95 642.50,346.80 643.50,348.45 644.50,348.61 645.20,350.40 646.20,347.28 647.20,347.44 647.90,346.80 648.90,335.86 649.60,329.00 650.85,288.50 651.40,287.90 651.95,288.50 652.90,329.00 654.10,352.00 654.90,348.70 655.85,325.10 656.40,324.50 656.95,325.10 657.90,348.70 658.60,352.00 659.60,350.28 660.60,349.71 661.25,346.80 661.95,313.50 662.50,312.90 663.05,313.50 663.90,352.00 664.90,347.78 665.90,342.24 666.60,338.75 667.60,344.65 668.40,348.60 669.40,350.54 670.40,349.61 671.00,352.00 672.00,346.02 672.90,337.90 674.05,310.80 674.60,310.20 675.15,310.80 676.40,341.40 677.40,349.41 678.20,354.00 679.20,354.61 680.20,353.59 680.90,352.00 681.90,353.14 682.90,354.69 683.90,355.16 684.50,357.50 685.10,352.04 686.05,312.60 686.60,312.00 687.15,312.60 687.70,357.50 688.00,357.00 688.00,378.00 294.50,378.00" fill="url(#gm)" fill-opacity="0.88"/>
<defs><clipPath id="bandclip"><rect x="468.5" y="121" width="48.5" height="257"/></clipPath><linearGradient id="gmb" x1="0" y1="121" x2="0" y2="378" gradientUnits="userSpaceOnUse"><stop offset="0" stop-color="#c4dcec"/><stop offset="0.335" stop-color="#81b2d4"/><stop offset="0.463" stop-color="#669dc6"/><stop offset="0.696" stop-color="#3273c6"/><stop offset="0.852" stop-color="#0a3c8c"/><stop offset="1" stop-color="#041858"/></linearGradient></defs>
<polygon points="294.50,356.00 295.50,355.70 296.20,354.00 297.00,357.50 298.00,350.18 298.60,346.80 299.80,355.70 301.00,361.00 302.10,352.00 302.85,325.10 303.40,324.50 303.95,325.10 304.30,341.00 305.70,352.00 307.00,354.00 308.40,346.80 309.60,342.00 311.00,348.60 312.30,354.80 313.60,354.00 314.60,337.90 314.95,323.30 315.50,322.70 316.05,323.30 316.80,337.90 317.70,348.60 318.60,345.00 319.60,344.74 320.40,346.80 321.45,318.80 322.00,318.20 322.55,318.80 323.60,337.90 324.80,348.60 325.80,350.48 326.60,351.00 327.90,346.80 328.90,346.55 329.30,348.60 330.70,352.00 332.00,350.40 332.75,314.35 333.30,313.75 333.85,314.35 334.50,337.90 335.50,343.11 336.25,346.80 337.25,347.35 338.00,348.60 339.30,341.40 340.70,346.80 341.70,345.21 342.70,346.83 343.40,346.80 344.40,343.13 345.20,343.20 346.20,342.96 347.20,341.65 347.90,343.20 348.90,337.49 349.60,336.00 351.00,326.25 352.30,332.50 353.30,330.19 354.30,329.60 355.00,327.00 356.00,321.76 356.80,320.00 357.80,316.53 358.60,313.75 360.00,316.40 361.00,323.35 361.80,330.70 362.45,315.20 363.00,314.60 363.55,315.20 364.50,333.43 364.80,336.00 365.80,336.46 366.60,336.00 367.90,316.40 368.75,292.90 369.30,292.30 369.85,292.90 370.70,337.90 371.70,341.10 372.90,341.40 373.90,343.06 374.90,343.80 375.50,345.00 376.50,345.38 377.50,340.70 378.20,341.40 379.20,341.39 380.20,338.05 380.90,337.90 381.90,339.56 382.70,343.20 383.70,337.82 384.70,334.51 385.70,332.34 386.25,329.00 387.25,334.94 388.00,341.40 389.00,339.69 390.00,337.90 390.70,336.00 391.70,328.65 392.50,323.60 393.50,333.66 394.30,341.40 395.30,338.53 396.30,337.22 397.00,337.90 398.00,332.21 398.75,329.80 399.75,339.14 400.50,345.00 401.50,342.74 402.30,341.40 403.10,337.12 404.05,306.30 404.60,305.70 405.15,306.30 405.90,337.90 406.90,342.18 407.70,346.80 408.70,346.44 409.70,345.30 410.40,345.00 411.40,344.97 412.40,347.44 413.00,346.80 414.00,346.60 415.10,344.87 416.05,331.30 416.60,330.70 417.15,331.30 418.40,348.60 419.50,345.49 420.45,323.30 421.00,322.70 421.55,323.30 422.50,340.74 423.75,343.20 424.75,339.51 425.80,337.52 426.75,296.50 427.30,295.90 427.85,296.50 428.75,341.40 430.00,350.40 431.00,335.78 431.80,323.60 432.80,308.71 433.60,296.80 434.60,281.69 435.40,269.60 436.40,286.60 437.00,296.80 438.00,306.60 439.00,316.40 440.00,327.49 441.00,339.75 441.60,345.00 442.60,343.83 443.60,340.24 444.30,339.60 445.30,341.83 446.30,339.23 447.30,340.81 447.90,341.40 448.90,341.81 449.90,339.12 450.90,339.82 451.40,339.60 452.40,341.27 453.40,346.87 454.10,348.60 455.10,346.22 456.10,342.20 456.80,339.60 457.80,341.30 458.80,339.62 460.00,340.70 461.00,341.85 462.00,341.94 462.90,342.00 463.90,341.13 464.90,339.53 465.50,339.00 466.50,338.56 467.50,338.12 468.00,337.90 469.00,335.37 470.00,332.84 471.40,329.30 472.40,325.37 473.40,321.44 474.30,317.90 475.30,311.51 476.30,305.11 477.10,300.00 478.10,292.87 479.10,285.73 480.10,278.60 481.10,271.47 481.60,267.90 482.60,261.43 483.60,254.96 484.60,248.48 485.20,244.60 486.20,236.67 487.20,228.75 487.90,223.20 488.90,217.25 490.00,210.70 491.40,205.00 492.40,208.80 492.90,210.70 494.10,223.20 495.10,228.50 496.10,233.79 496.80,237.50 497.80,236.50 498.60,235.70 499.50,244.60 500.50,250.79 501.50,256.98 502.10,260.70 503.10,268.00 504.10,275.29 504.80,280.40 505.80,287.66 506.80,294.92 507.50,300.00 508.60,306.40 509.60,311.51 510.60,316.61 511.40,320.70 512.40,323.18 513.70,326.40 514.70,320.70 515.70,315.00 517.10,329.30 518.10,332.27 519.10,336.45 520.00,337.90 520.85,299.90 521.40,299.30 521.95,299.90 522.90,335.00 524.30,341.40 525.30,342.68 526.30,340.66 527.30,341.01 528.60,340.00 529.60,337.35 530.60,338.58 531.40,337.00 531.90,330.16 532.85,280.60 533.40,280.00 533.95,280.60 534.90,334.30 535.90,330.92 537.10,325.70 538.10,329.44 539.10,330.79 540.00,331.40 541.00,327.92 542.00,326.00 543.40,312.50 544.70,293.80 546.10,280.40 547.40,267.00 548.75,253.60 550.10,232.00 551.40,208.00 552.80,232.00 553.60,259.00 554.60,264.89 555.40,269.60 556.80,277.70 558.10,296.40 559.50,312.50 560.50,320.17 561.60,328.60 562.60,333.82 563.50,339.30 564.50,345.72 565.10,348.60 566.10,342.58 567.10,340.00 568.10,342.83 569.10,344.74 570.00,348.60 571.00,345.87 572.00,344.30 572.80,344.81 573.75,317.60 574.30,317.00 574.85,317.60 575.80,329.67 577.10,331.40 578.50,327.68 579.45,301.00 580.00,300.40 580.55,301.00 580.90,332.50 581.90,337.41 582.70,339.60 583.70,337.32 584.50,337.90 585.70,329.00 586.80,317.30 588.00,330.70 588.75,307.20 589.30,306.60 589.85,307.20 590.70,321.80 592.10,305.70 593.10,298.76 593.90,293.20 595.20,285.20 596.40,296.80 597.40,313.47 597.90,321.80 599.30,330.70 600.50,343.20 601.50,341.29 602.30,341.40 603.30,338.56 604.10,337.00 605.10,342.28 605.90,344.10 606.90,340.92 607.90,340.58 608.60,339.60 609.60,339.31 610.40,338.75 611.40,341.69 612.10,341.40 613.10,339.55 613.90,336.00 614.90,331.31 615.40,327.00 616.40,334.77 617.50,345.00 618.50,341.31 619.60,337.90 620.85,305.40 621.40,304.80 621.95,305.40 622.90,337.90 623.90,339.45 624.60,341.40 625.60,340.45 626.10,337.90 626.75,317.90 627.30,317.30 627.85,317.90 628.60,337.90 629.60,341.07 630.90,341.40 631.90,341.48 632.90,342.90 633.60,345.00 634.60,341.04 635.40,339.60 636.40,342.07 637.50,346.80 638.75,286.60 639.30,286.00 639.85,286.60 640.70,336.00 641.70,341.95 642.50,346.80 643.50,348.45 644.50,348.61 645.20,350.40 646.20,347.28 647.20,347.44 647.90,346.80 648.90,335.86 649.60,329.00 650.85,288.50 651.40,287.90 651.95,288.50 652.90,329.00 654.10,352.00 654.90,348.70 655.85,325.10 656.40,324.50 656.95,325.10 657.90,348.70 658.60,352.00 659.60,350.28 660.60,349.71 661.25,346.80 661.95,313.50 662.50,312.90 663.05,313.50 663.90,352.00 664.90,347.78 665.90,342.24 666.60,338.75 667.60,344.65 668.40,348.60 669.40,350.54 670.40,349.61 671.00,352.00 672.00,346.02 672.90,337.90 674.05,310.80 674.60,310.20 675.15,310.80 676.40,341.40 677.40,349.41 678.20,354.00 679.20,354.61 680.20,353.59 680.90,352.00 681.90,353.14 682.90,354.69 683.90,355.16 684.50,357.50 685.10,352.04 686.05,312.60 686.60,312.00 687.15,312.60 687.70,357.50 688.00,357.00 688.00,378.00 294.50,378.00" fill="url(#gmb)" clip-path="url(#bandclip)"/>
<polyline points="294.50,356.00 295.50,355.70 296.20,354.00 297.00,357.50 298.00,350.18 298.60,346.80 299.80,355.70 301.00,361.00 302.10,352.00 302.85,325.10 303.40,324.50 303.95,325.10 304.30,341.00 305.70,352.00 307.00,354.00 308.40,346.80 309.60,342.00 311.00,348.60 312.30,354.80 313.60,354.00 314.60,337.90 314.95,323.30 315.50,322.70 316.05,323.30 316.80,337.90 317.70,348.60 318.60,345.00 319.60,344.74 320.40,346.80 321.45,318.80 322.00,318.20 322.55,318.80 323.60,337.90 324.80,348.60 325.80,350.48 326.60,351.00 327.90,346.80 328.90,346.55 329.30,348.60 330.70,352.00 332.00,350.40 332.75,314.35 333.30,313.75 333.85,314.35 334.50,337.90 335.50,343.11 336.25,346.80 337.25,347.35 338.00,348.60 339.30,341.40 340.70,346.80 341.70,345.21 342.70,346.83 343.40,346.80 344.40,343.13 345.20,343.20 346.20,342.96 347.20,341.65 347.90,343.20 348.90,337.49 349.60,336.00 351.00,326.25 352.30,332.50 353.30,330.19 354.30,329.60 355.00,327.00 356.00,321.76 356.80,320.00 357.80,316.53 358.60,313.75 360.00,316.40 361.00,323.35 361.80,330.70 362.45,315.20 363.00,314.60 363.55,315.20 364.50,333.43 364.80,336.00 365.80,336.46 366.60,336.00 367.90,316.40 368.75,292.90 369.30,292.30 369.85,292.90 370.70,337.90 371.70,341.10 372.90,341.40 373.90,343.06 374.90,343.80 375.50,345.00 376.50,345.38 377.50,340.70 378.20,341.40 379.20,341.39 380.20,338.05 380.90,337.90 381.90,339.56 382.70,343.20 383.70,337.82 384.70,334.51 385.70,332.34 386.25,329.00 387.25,334.94 388.00,341.40 389.00,339.69 390.00,337.90 390.70,336.00 391.70,328.65 392.50,323.60 393.50,333.66 394.30,341.40 395.30,338.53 396.30,337.22 397.00,337.90 398.00,332.21 398.75,329.80 399.75,339.14 400.50,345.00 401.50,342.74 402.30,341.40 403.10,337.12 404.05,306.30 404.60,305.70 405.15,306.30 405.90,337.90 406.90,342.18 407.70,346.80 408.70,346.44 409.70,345.30 410.40,345.00 411.40,344.97 412.40,347.44 413.00,346.80 414.00,346.60 415.10,344.87 416.05,331.30 416.60,330.70 417.15,331.30 418.40,348.60 419.50,345.49 420.45,323.30 421.00,322.70 421.55,323.30 422.50,340.74 423.75,343.20 424.75,339.51 425.80,337.52 426.75,296.50 427.30,295.90 427.85,296.50 428.75,341.40 430.00,350.40 431.00,335.78 431.80,323.60 432.80,308.71 433.60,296.80 434.60,281.69 435.40,269.60 436.40,286.60 437.00,296.80 438.00,306.60 439.00,316.40 440.00,327.49 441.00,339.75 441.60,345.00 442.60,343.83 443.60,340.24 444.30,339.60 445.30,341.83 446.30,339.23 447.30,340.81 447.90,341.40 448.90,341.81 449.90,339.12 450.90,339.82 451.40,339.60 452.40,341.27 453.40,346.87 454.10,348.60 455.10,346.22 456.10,342.20 456.80,339.60 457.80,341.30 458.80,339.62 460.00,340.70 461.00,341.85 462.00,341.94 462.90,342.00 463.90,341.13 464.90,339.53 465.50,339.00 466.50,338.56 467.50,338.12 468.00,337.90 469.00,335.37 470.00,332.84 471.40,329.30 472.40,325.37 473.40,321.44 474.30,317.90 475.30,311.51 476.30,305.11 477.10,300.00 478.10,292.87 479.10,285.73 480.10,278.60 481.10,271.47 481.60,267.90 482.60,261.43 483.60,254.96 484.60,248.48 485.20,244.60 486.20,236.67 487.20,228.75 487.90,223.20 488.90,217.25 490.00,210.70 491.40,205.00 492.40,208.80 492.90,210.70 494.10,223.20 495.10,228.50 496.10,233.79 496.80,237.50 497.80,236.50 498.60,235.70 499.50,244.60 500.50,250.79 501.50,256.98 502.10,260.70 503.10,268.00 504.10,275.29 504.80,280.40 505.80,287.66 506.80,294.92 507.50,300.00 508.60,306.40 509.60,311.51 510.60,316.61 511.40,320.70 512.40,323.18 513.70,326.40 514.70,320.70 515.70,315.00 517.10,329.30 518.10,332.27 519.10,336.45 520.00,337.90 520.85,299.90 521.40,299.30 521.95,299.90 522.90,335.00 524.30,341.40 525.30,342.68 526.30,340.66 527.30,341.01 528.60,340.00 529.60,337.35 530.60,338.58 531.40,337.00 531.90,330.16 532.85,280.60 533.40,280.00 533.95,280.60 534.90,334.30 535.90,330.92 537.10,325.70 538.10,329.44 539.10,330.79 540.00,331.40 541.00,327.92 542.00,326.00 543.40,312.50 544.70,293.80 546.10,280.40 547.40,267.00 548.75,253.60 550.10,232.00 551.40,208.00 552.80,232.00 553.60,259.00 554.60,264.89 555.40,269.60 556.80,277.70 558.10,296.40 559.50,312.50 560.50,320.17 561.60,328.60 562.60,333.82 563.50,339.30 564.50,345.72 565.10,348.60 566.10,342.58 567.10,340.00 568.10,342.83 569.10,344.74 570.00,348.60 571.00,345.87 572.00,344.30 572.80,344.81 573.75,317.60 574.30,317.00 574.85,317.60 575.80,329.67 577.10,331.40 578.50,327.68 579.45,301.00 580.00,300.40 580.55,301.00 580.90,332.50 581.90,337.41 582.70,339.60 583.70,337.32 584.50,337.90 585.70,329.00 586.80,317.30 588.00,330.70 588.75,307.20 589.30,306.60 589.85,307.20 590.70,321.80 592.10,305.70 593.10,298.76 593.90,293.20 595.20,285.20 596.40,296.80 597.40,313.47 597.90,321.80 599.30,330.70 600.50,343.20 601.50,341.29 602.30,341.40 603.30,338.56 604.10,337.00 605.10,342.28 605.90,344.10 606.90,340.92 607.90,340.58 608.60,339.60 609.60,339.31 610.40,338.75 611.40,341.69 612.10,341.40 613.10,339.55 613.90,336.00 614.90,331.31 615.40,327.00 616.40,334.77 617.50,345.00 618.50,341.31 619.60,337.90 620.85,305.40 621.40,304.80 621.95,305.40 622.90,337.90 623.90,339.45 624.60,341.40 625.60,340.45 626.10,337.90 626.75,317.90 627.30,317.30 627.85,317.90 628.60,337.90 629.60,341.07 630.90,341.40 631.90,341.48 632.90,342.90 633.60,345.00 634.60,341.04 635.40,339.60 636.40,342.07 637.50,346.80 638.75,286.60 639.30,286.00 639.85,286.60 640.70,336.00 641.70,341.95 642.50,346.80 643.50,348.45 644.50,348.61 645.20,350.40 646.20,347.28 647.20,347.44 647.90,346.80 648.90,335.86 649.60,329.00 650.85,288.50 651.40,287.90 651.95,288.50 652.90,329.00 654.10,352.00 654.90,348.70 655.85,325.10 656.40,324.50 656.95,325.10 657.90,348.70 658.60,352.00 659.60,350.28 660.60,349.71 661.25,346.80 661.95,313.50 662.50,312.90 663.05,313.50 663.90,352.00 664.90,347.78 665.90,342.24 666.60,338.75 667.60,344.65 668.40,348.60 669.40,350.54 670.40,349.61 671.00,352.00 672.00,346.02 672.90,337.90 674.05,310.80 674.60,310.20 675.15,310.80 676.40,341.40 677.40,349.41 678.20,354.00 679.20,354.61 680.20,353.59 680.90,352.00 681.90,353.14 682.90,354.69 683.90,355.16 684.50,357.50 685.10,352.04 686.05,312.60 686.60,312.00 687.15,312.60 687.70,357.50 688.00,357.00" fill="none" stroke="#fff" stroke-width="1.0" stroke-linejoin="miter" stroke-miterlimit="10" shape-rendering="crispEdges"/>
<rect x="294" y="121" width="1" height="257" fill="#c8c8c8"/>
<rect x="468.5" y="91" width="48.5" height="30" fill="#b8b8b8" fill-opacity="0.33"/>
<rect x="468.5" y="121" width="48.5" height="257" fill="#b8b8b8" fill-opacity="0.42"/>
<rect x="474" y="121" width="1" height="257" fill="#fff" fill-opacity="0.10"/>
<rect x="492.8" y="91" width="1.25" height="287" fill="#ff0a0a"/>
<text xml:space="preserve" x="291.60" y="124.60" font-family="Liberation Sans" font-size="11" fill="#ececec" font-weight="normal" text-anchor="end" >0</text>
<text xml:space="preserve" x="291.60" y="144.07" font-family="Liberation Sans" font-size="11" fill="#ececec" font-weight="normal" text-anchor="end" >-5</text>
<text xml:space="preserve" x="291.60" y="163.54" font-family="Liberation Sans" font-size="11" fill="#ececec" font-weight="normal" text-anchor="end" >-10</text>
<text xml:space="preserve" x="291.60" y="183.01" font-family="Liberation Sans" font-size="11" fill="#ececec" font-weight="normal" text-anchor="end" >-15</text>
<text xml:space="preserve" x="291.60" y="202.48" font-family="Liberation Sans" font-size="11" fill="#ececec" font-weight="normal" text-anchor="end" >-20</text>
<text xml:space="preserve" x="291.60" y="221.95" font-family="Liberation Sans" font-size="11" fill="#ececec" font-weight="normal" text-anchor="end" >-25</text>
<text xml:space="preserve" x="291.60" y="241.42" font-family="Liberation Sans" font-size="11" fill="#ececec" font-weight="normal" text-anchor="end" >-30</text>
<text xml:space="preserve" x="291.60" y="260.89" font-family="Liberation Sans" font-size="11" fill="#ececec" font-weight="normal" text-anchor="end" >-35</text>
<text xml:space="preserve" x="291.60" y="280.36" font-family="Liberation Sans" font-size="11" fill="#ececec" font-weight="normal" text-anchor="end" >-40</text>
<text xml:space="preserve" x="291.60" y="299.83" font-family="Liberation Sans" font-size="11" fill="#ececec" font-weight="normal" text-anchor="end" >-45</text>
<text xml:space="preserve" x="291.60" y="319.30" font-family="Liberation Sans" font-size="11" fill="#ececec" font-weight="normal" text-anchor="end" >-50</text>
<text xml:space="preserve" x="291.60" y="338.77" font-family="Liberation Sans" font-size="11" fill="#ececec" font-weight="normal" text-anchor="end" >-55</text>
<text xml:space="preserve" x="291.60" y="358.24" font-family="Liberation Sans" font-size="11" fill="#ececec" font-weight="normal" text-anchor="end" >-60</text>
<text xml:space="preserve" x="291.60" y="377.71" font-family="Liberation Sans" font-size="11" fill="#ececec" font-weight="normal" text-anchor="end" >-65</text>
<text xml:space="preserve" x="295.00" y="109.60" font-family="Liberation Mono" font-size="12.5" fill="#f4f4f4" font-weight="normal" text-anchor="start" textLength="342.60" lengthAdjust="spacing" >OKX FOLK [ E35B ]  [ FEd Jul &amp; Gott nytt ar! ]</text>
<text xml:space="preserve" x="472.60" y="138.80" font-family="Liberation Mono" font-size="10.3" fill="#d8d8d8" font-weight="normal" text-anchor="start" textLength="39.20" lengthAdjust="spacingAndGlyphs" >FOLKRA</text>
<text xml:space="preserve" x="479.00" y="149.60" font-family="Liberation Mono" font-size="10.3" fill="#d8d8d8" font-weight="normal" text-anchor="start" textLength="26.60" lengthAdjust="spacingAndGlyphs" >DION</text>
<text xml:space="preserve" x="482.20" y="170.50" font-family="Liberation Mono" font-size="10.3" fill="#d8d8d8" font-weight="normal" text-anchor="start" textLength="19.40" lengthAdjust="spacingAndGlyphs" >WFM</text>
<path d="M295.1,412.40 H382 M295.1,423.40 H382 M295.1,434.40 H382 M295.1,445.40 H382 M295.1,456.40 H382 M295.1,467.40 H382 M295.1,478.40 H382 M295.1,489.40 H382 M295.1,500.40 H382" stroke="#6e6e6e" stroke-width="1" stroke-dasharray="3 1" fill="none"/>
<path d="M366.9,412 V512" stroke="#5a5a5a" stroke-width="1" fill="none"/>
<polygon points="294.60,497.50 295.60,493.77 296.80,491.00 297.80,489.31 298.80,486.96 300.00,485.70 301.00,483.74 301.70,481.40 302.70,481.98 303.20,482.50 304.20,480.79 305.40,478.20 306.40,479.48 307.40,478.77 308.10,479.30 309.10,477.34 310.10,474.19 311.10,472.56 311.80,470.70 312.80,470.11 313.80,466.74 314.80,465.12 316.10,463.20 317.10,461.89 318.10,461.37 319.10,458.62 320.40,457.40 321.40,456.18 322.40,455.47 323.40,453.86 324.60,453.60 325.60,452.34 326.60,452.51 327.60,451.08 328.90,451.00 329.90,450.02 330.90,449.15 331.90,449.18 333.20,448.90 334.20,447.39 334.90,447.10 335.80,442.40 336.90,448.90 337.90,450.09 338.90,449.88 339.60,451.00 340.60,450.62 341.60,450.74 342.60,452.37 343.90,451.90 344.90,452.25 345.90,453.35 346.90,453.07 348.20,453.10 349.20,452.44 350.20,454.69 351.40,454.60 352.40,456.00 353.40,457.23 354.40,458.24 355.70,461.00 356.70,463.18 357.70,463.72 358.70,465.01 360.00,467.50 361.00,469.65 362.00,471.21 363.00,472.14 364.30,472.90 365.30,474.52 366.30,476.54 367.50,478.20 368.50,479.86 369.50,480.81 370.50,479.26 371.80,481.40 372.80,482.88 373.80,483.33 374.80,483.08 376.10,485.30 377.10,480.78 378.20,476.10 379.30,486.80 380.30,490.96 381.30,495.37 381.90,496.40 381.90,512.00 294.60,512.00" fill="url(#gs)" fill-opacity="0.9"/>
<polyline points="294.60,497.50 295.60,493.77 296.80,491.00 297.80,489.31 298.80,486.96 300.00,485.70 301.00,483.74 301.70,481.40 302.70,481.98 303.20,482.50 304.20,480.79 305.40,478.20 306.40,479.48 307.40,478.77 308.10,479.30 309.10,477.34 310.10,474.19 311.10,472.56 311.80,470.70 312.80,470.11 313.80,466.74 314.80,465.12 316.10,463.20 317.10,461.89 318.10,461.37 319.10,458.62 320.40,457.40 321.40,456.18 322.40,455.47 323.40,453.86 324.60,453.60 325.60,452.34 326.60,452.51 327.60,451.08 328.90,451.00 329.90,450.02 330.90,449.15 331.90,449.18 333.20,448.90 334.20,447.39 334.90,447.10 335.80,442.40 336.90,448.90 337.90,450.09 338.90,449.88 339.60,451.00 340.60,450.62 341.60,450.74 342.60,452.37 343.90,451.90 344.90,452.25 345.90,453.35 346.90,453.07 348.20,453.10 349.20,452.44 350.20,454.69 351.40,454.60 352.40,456.00 353.40,457.23 354.40,458.24 355.70,461.00 356.70,463.18 357.70,463.72 358.70,465.01 360.00,467.50 361.00,469.65 362.00,471.21 363.00,472.14 364.30,472.90 365.30,474.52 366.30,476.54 367.50,478.20 368.50,479.86 369.50,480.81 370.50,479.26 371.80,481.40 372.80,482.88 373.80,483.33 374.80,483.08 376.10,485.30 377.10,480.78 378.20,476.10 379.30,486.80 380.30,490.96 381.30,495.37 381.90,496.40" fill="none" stroke="#fff" stroke-width="1.0" shape-rendering="crispEdges"/>
<rect x="294.6" y="412" width="1" height="100.5" fill="#c8c8c8"/>
<rect x="294.6" y="511.5" width="87.39999999999998" height="1" fill="#c8c8c8"/>
<text xml:space="preserve" x="291.80" y="415.90" font-family="Liberation Sans" font-size="11" fill="#ececec" font-weight="normal" text-anchor="end" >0</text>
<text xml:space="preserve" x="291.80" y="427.00" font-family="Liberation Sans" font-size="11" fill="#ececec" font-weight="normal" text-anchor="end" >-10</text>
<text xml:space="preserve" x="291.80" y="438.10" font-family="Liberation Sans" font-size="11" fill="#ececec" font-weight="normal" text-anchor="end" >-20</text>
<text xml:space="preserve" x="291.80" y="449.20" font-family="Liberation Sans" font-size="11" fill="#ececec" font-weight="normal" text-anchor="end" >-30</text>
<text xml:space="preserve" x="291.80" y="460.30" font-family="Liberation Sans" font-size="11" fill="#ececec" font-weight="normal" text-anchor="end" >-40</text>
<text xml:space="preserve" x="291.80" y="471.40" font-family="Liberation Sans" font-size="11" fill="#ececec" font-weight="normal" text-anchor="end" >-50</text>
<text xml:space="preserve" x="291.80" y="482.50" font-family="Liberation Sans" font-size="11" fill="#ececec" font-weight="normal" text-anchor="end" >-60</text>
<text xml:space="preserve" x="291.80" y="493.60" font-family="Liberation Sans" font-size="11" fill="#ececec" font-weight="normal" text-anchor="end" >-70</text>
<text xml:space="preserve" x="291.80" y="504.70" font-family="Liberation Sans" font-size="11" fill="#ececec" font-weight="normal" text-anchor="end" >-80</text>
<text xml:space="preserve" x="291.80" y="515.80" font-family="Liberation Sans" font-size="11" fill="#ececec" font-weight="normal" text-anchor="end" >-90</text>
<text xml:space="preserve" x="295.20" y="401.40" font-family="Liberation Mono" font-size="12.5" fill="#f4f4f4" font-weight="normal" text-anchor="start" textLength="82.50" lengthAdjust="spacing" >IF Spectrum</text>
<text xml:space="preserve" x="345.30" y="531.10" font-family="Liberation Sans" font-size="12.2" fill="#c8c8c8" font-weight="normal" text-anchor="start" textLength="42.00" lengthAdjust="spacingAndGlyphs" >93,380M</text>
<rect x="337.6" y="382" width="1.25" height="160" fill="#ff0a0a"/>
<path d="M446.9,412.40 H534 M446.9,423.40 H534 M446.9,434.40 H534 M446.9,445.40 H534 M446.9,456.40 H534 M446.9,467.40 H534 M446.9,478.40 H534 M446.9,489.40 H534 M446.9,500.40 H534" stroke="#6e6e6e" stroke-width="1" stroke-dasharray="3 1" fill="none"/>
<path d="M513.6,412 V512" stroke="#5a5a5a" stroke-width="1" fill="none"/>
<polygon points="446.40,423.60 447.20,425.70 448.50,437.50 449.50,443.92 450.00,446.10 451.00,446.02 452.10,444.60 453.10,444.27 454.30,442.90 455.30,442.13 456.40,440.70 457.40,438.56 458.60,437.50 459.60,439.60 460.70,463.20 461.80,463.20 462.90,426.80 463.90,461.10 465.00,463.20 466.00,460.29 467.10,458.90 468.10,458.29 469.10,457.27 470.40,457.40 471.40,456.72 472.40,456.78 473.60,456.10 474.60,454.12 475.60,454.05 476.10,452.50 477.10,450.63 477.90,447.10 478.90,443.71 480.00,441.80 481.00,445.37 482.10,449.30 483.10,452.35 484.30,455.30 485.30,456.35 486.30,454.75 487.50,456.10 488.50,456.36 489.50,457.57 490.70,457.40 491.70,457.52 492.90,455.70 493.90,448.97 494.60,446.10 495.60,442.80 496.10,441.80 497.10,447.00 498.20,451.40 499.20,453.42 500.40,457.40 501.40,457.68 502.40,457.54 503.60,458.30 504.60,457.41 505.70,458.90 506.70,460.29 507.90,460.00 508.90,461.14 509.90,460.66 510.90,461.75 512.10,461.70 513.10,462.48 514.10,462.50 515.10,463.04 516.40,462.60 517.40,462.77 518.40,462.47 519.40,462.66 520.70,463.20 521.70,463.80 522.70,462.11 523.70,462.11 525.00,463.20 526.00,462.60 527.00,461.13 528.20,461.10 529.20,456.43 530.30,452.50 531.40,462.10 532.40,463.84 533.60,465.40 533.60,512.00 446.40,512.00" fill="url(#gs)" fill-opacity="0.9"/>
<polyline points="446.40,423.60 447.20,425.70 448.50,437.50 449.50,443.92 450.00,446.10 451.00,446.02 452.10,444.60 453.10,444.27 454.30,442.90 455.30,442.13 456.40,440.70 457.40,438.56 458.60,437.50 459.60,439.60 460.70,463.20 461.80,463.20 462.90,426.80 463.90,461.10 465.00,463.20 466.00,460.29 467.10,458.90 468.10,458.29 469.10,457.27 470.40,457.40 471.40,456.72 472.40,456.78 473.60,456.10 474.60,454.12 475.60,454.05 476.10,452.50 477.10,450.63 477.90,447.10 478.90,443.71 480.00,441.80 481.00,445.37 482.10,449.30 483.10,452.35 484.30,455.30 485.30,456.35 486.30,454.75 487.50,456.10 488.50,456.36 489.50,457.57 490.70,457.40 491.70,457.52 492.90,455.70 493.90,448.97 494.60,446.10 495.60,442.80 496.10,441.80 497.10,447.00 498.20,451.40 499.20,453.42 500.40,457.40 501.40,457.68 502.40,457.54 503.60,458.30 504.60,457.41 505.70,458.90 506.70,460.29 507.90,460.00 508.90,461.14 509.90,460.66 510.90,461.75 512.10,461.70 513.10,462.48 514.10,462.50 515.10,463.04 516.40,462.60 517.40,462.77 518.40,462.47 519.40,462.66 520.70,463.20 521.70,463.80 522.70,462.11 523.70,462.11 525.00,463.20 526.00,462.60 527.00,461.13 528.20,461.10 529.20,456.43 530.30,452.50 531.40,462.10 532.40,463.84 533.60,465.40" fill="none" stroke="#fff" stroke-width="1.0" shape-rendering="crispEdges"/>
<rect x="446.4" y="412" width="1" height="100.5" fill="#c8c8c8"/>
<rect x="446.4" y="511.5" width="87.60000000000002" height="1" fill="#c8c8c8"/>
<text xml:space="preserve" x="443.60" y="415.90" font-family="Liberation Sans" font-size="11" fill="#ececec" font-weight="normal" text-anchor="end" >0</text>
<text xml:space="preserve" x="443.60" y="427.00" font-family="Liberation Sans" font-size="11" fill="#ececec" font-weight="normal" text-anchor="end" >-10</text>
<text xml:space="preserve" x="443.60" y="438.10" font-family="Liberation Sans" font-size="11" fill="#ececec" font-weight="normal" text-anchor="end" >-20</text>
<text xml:space="preserve" x="443.60" y="449.20" font-family="Liberation Sans" font-size="11" fill="#ececec" font-weight="normal" text-anchor="end" >-30</text>
<text xml:space="preserve" x="443.60" y="460.30" font-family="Liberation Sans" font-size="11" fill="#ececec" font-weight="normal" text-anchor="end" >-40</text>
<text xml:space="preserve" x="443.60" y="471.40" font-family="Liberation Sans" font-size="11" fill="#ececec" font-weight="normal" text-anchor="end" >-50</text>
<text xml:space="preserve" x="443.60" y="482.50" font-family="Liberation Sans" font-size="11" fill="#ececec" font-weight="normal" text-anchor="end" >-60</text>
<text xml:space="preserve" x="443.60" y="493.60" font-family="Liberation Sans" font-size="11" fill="#ececec" font-weight="normal" text-anchor="end" >-70</text>
<text xml:space="preserve" x="443.60" y="504.70" font-family="Liberation Sans" font-size="11" fill="#ececec" font-weight="normal" text-anchor="end" >-80</text>
<text xml:space="preserve" x="443.60" y="515.80" font-family="Liberation Sans" font-size="11" fill="#ececec" font-weight="normal" text-anchor="end" >-90</text>
<text xml:space="preserve" x="447.90" y="401.40" font-family="Liberation Mono" font-size="12.5" fill="#f4f4f4" font-weight="normal" text-anchor="start" textLength="111.30" lengthAdjust="spacing" >FM MPX Spectrum</text>
<text xml:space="preserve" x="438.60" y="531.10" font-family="Liberation Sans" font-size="12.2" fill="#c8c8c8" font-weight="normal" text-anchor="start" textLength="14.60" lengthAdjust="spacingAndGlyphs" >DC</text>
<text xml:space="preserve" x="503.70" y="531.10" font-family="Liberation Sans" font-size="12.2" fill="#c8c8c8" font-weight="normal" text-anchor="start" textLength="18.30" lengthAdjust="spacingAndGlyphs" >76k</text>
<path d="M598.9,412.40 H688 M598.9,423.40 H688 M598.9,434.40 H688 M598.9,445.40 H688 M598.9,456.40 H688 M598.9,467.40 H688 M598.9,478.40 H688 M598.9,489.40 H688 M598.9,500.40 H688" stroke="#6e6e6e" stroke-width="1" stroke-dasharray="3 1" fill="none"/>
<path d="M654.4,412 V512" stroke="#5a5a5a" stroke-width="1" fill="none"/>
<polygon points="598.30,433.20 599.30,437.22 600.00,438.60 601.00,442.05 601.70,446.10 602.70,449.53 603.20,450.40 604.20,452.67 605.40,455.30 606.40,457.10 607.50,457.40 608.50,456.86 609.60,458.30 610.60,459.43 611.80,458.90 612.80,459.62 613.90,461.10 614.90,461.11 616.10,462.10 617.10,463.79 618.20,463.90 619.20,464.93 620.20,467.17 621.40,467.50 622.40,468.17 623.40,469.61 624.60,470.70 625.60,471.11 626.60,470.76 627.90,469.60 628.90,469.51 629.90,469.18 631.10,468.60 632.10,469.50 633.10,468.23 634.30,468.10 635.30,468.50 636.30,469.74 637.50,469.60 638.50,470.92 639.50,471.29 640.70,471.80 641.70,473.60 642.70,472.16 643.90,473.90 644.90,476.81 645.90,478.89 647.10,480.40 648.10,477.41 649.10,477.46 650.40,473.90 651.40,471.30 652.40,469.54 653.10,466.40 654.10,470.26 654.60,470.70 655.60,470.89 656.80,472.40 657.80,471.05 658.80,469.77 660.00,469.60 661.00,470.25 662.00,471.21 663.20,470.30 664.20,468.71 665.20,469.09 666.40,468.60 667.40,468.17 668.40,470.15 669.60,469.60 670.60,468.79 671.60,469.69 672.90,468.10 673.90,469.08 675.00,469.60 676.00,472.57 677.10,474.90 678.10,476.51 679.30,480.40 680.30,485.76 681.40,490.00 682.40,495.68 683.10,498.60 684.10,508.07 684.60,511.40 684.60,512.00 598.30,512.00" fill="url(#gs)" fill-opacity="0.9"/>
<polyline points="598.30,433.20 599.30,437.22 600.00,438.60 601.00,442.05 601.70,446.10 602.70,449.53 603.20,450.40 604.20,452.67 605.40,455.30 606.40,457.10 607.50,457.40 608.50,456.86 609.60,458.30 610.60,459.43 611.80,458.90 612.80,459.62 613.90,461.10 614.90,461.11 616.10,462.10 617.10,463.79 618.20,463.90 619.20,464.93 620.20,467.17 621.40,467.50 622.40,468.17 623.40,469.61 624.60,470.70 625.60,471.11 626.60,470.76 627.90,469.60 628.90,469.51 629.90,469.18 631.10,468.60 632.10,469.50 633.10,468.23 634.30,468.10 635.30,468.50 636.30,469.74 637.50,469.60 638.50,470.92 639.50,471.29 640.70,471.80 641.70,473.60 642.70,472.16 643.90,473.90 644.90,476.81 645.90,478.89 647.10,480.40 648.10,477.41 649.10,477.46 650.40,473.90 651.40,471.30 652.40,469.54 653.10,466.40 654.10,470.26 654.60,470.70 655.60,470.89 656.80,472.40 657.80,471.05 658.80,469.77 660.00,469.60 661.00,470.25 662.00,471.21 663.20,470.30 664.20,468.71 665.20,469.09 666.40,468.60 667.40,468.17 668.40,470.15 669.60,469.60 670.60,468.79 671.60,469.69 672.90,468.10 673.90,469.08 675.00,469.60 676.00,472.57 677.10,474.90 678.10,476.51 679.30,480.40 680.30,485.76 681.40,490.00 682.40,495.68 683.10,498.60 684.10,508.07 684.60,511.40" fill="none" stroke="#fff" stroke-width="1.0" shape-rendering="crispEdges"/>
<rect x="598.4" y="412" width="1" height="100.5" fill="#c8c8c8"/>
<rect x="598.4" y="511.5" width="89.60000000000002" height="1" fill="#c8c8c8"/>
<text xml:space="preserve" x="595.60" y="415.90" font-family="Liberation Sans" font-size="11" fill="#ececec" font-weight="normal" text-anchor="end" >0</text>
<text xml:space="preserve" x="595.60" y="427.00" font-family="Liberation Sans" font-size="11" fill="#ececec" font-weight="normal" text-anchor="end" >-10</text>
<text xml:space="preserve" x="595.60" y="438.10" font-family="Liberation Sans" font-size="11" fill="#ececec" font-weight="normal" text-anchor="end" >-20</text>
<text xml:space="preserve" x="595.60" y="449.20" font-family="Liberation Sans" font-size="11" fill="#ececec" font-weight="normal" text-anchor="end" >-30</text>
<text xml:space="preserve" x="595.60" y="460.30" font-family="Liberation Sans" font-size="11" fill="#ececec" font-weight="normal" text-anchor="end" >-40</text>
<text xml:space="preserve" x="595.60" y="471.40" font-family="Liberation Sans" font-size="11" fill="#ececec" font-weight="normal" text-anchor="end" >-50</text>
<text xml:space="preserve" x="595.60" y="482.50" font-family="Liberation Sans" font-size="11" fill="#ececec" font-weight="normal" text-anchor="end" >-60</text>
<text xml:space="preserve" x="595.60" y="493.60" font-family="Liberation Sans" font-size="11" fill="#ececec" font-weight="normal" text-anchor="end" >-70</text>
<text xml:space="preserve" x="595.60" y="504.70" font-family="Liberation Sans" font-size="11" fill="#ececec" font-weight="normal" text-anchor="end" >-80</text>
<text xml:space="preserve" x="595.60" y="515.80" font-family="Liberation Sans" font-size="11" fill="#ececec" font-weight="normal" text-anchor="end" >-90</text>
<text xml:space="preserve" x="600.00" y="401.40" font-family="Liberation Mono" font-size="12.5" fill="#f4f4f4" font-weight="normal" text-anchor="start" textLength="104.00" lengthAdjust="spacing" >Audio Spectrum</text>
<text xml:space="preserve" x="590.60" y="531.10" font-family="Liberation Sans" font-size="12.2" fill="#c8c8c8" font-weight="normal" text-anchor="start" textLength="14.60" lengthAdjust="spacingAndGlyphs" >DC</text>
<text xml:space="preserve" x="645.40" y="531.10" font-family="Liberation Sans" font-size="12.2" fill="#c8c8c8" font-weight="normal" text-anchor="start" textLength="17.80" lengthAdjust="spacingAndGlyphs" >10k</text>
<text xml:space="preserve" x="730.60" y="104.30" font-family="Liberation Sans" font-size="12.2" fill="#000" font-weight="normal" text-anchor="start" textLength="28.80" lengthAdjust="spacingAndGlyphs" >Zoom</text>
<rect x="741" y="118" width="1" height="68" fill="#a8a8a8"/><rect x="742" y="118" width="1.3" height="68" fill="#fff"/><rect x="743.3" y="118" width="0.7" height="68" fill="#d8d8d8"/>
<rect x="727" y="124.2" width="4" height="1" fill="#bdbdbd"/><rect x="755" y="124.2" width="4" height="1" fill="#bdbdbd"/>
<rect x="727" y="130.3" width="4" height="1" fill="#bdbdbd"/><rect x="755" y="130.3" width="4" height="1" fill="#bdbdbd"/>
<rect x="727" y="136.5" width="4" height="1" fill="#bdbdbd"/><rect x="755" y="136.5" width="4" height="1" fill="#bdbdbd"/>
<rect x="727" y="142.6" width="4" height="1" fill="#bdbdbd"/><rect x="755" y="142.6" width="4" height="1" fill="#bdbdbd"/>
<rect x="727" y="148.8" width="4" height="1" fill="#bdbdbd"/><rect x="755" y="148.8" width="4" height="1" fill="#bdbdbd"/>
<rect x="727" y="154.9" width="4" height="1" fill="#bdbdbd"/><rect x="755" y="154.9" width="4" height="1" fill="#bdbdbd"/>
<rect x="727" y="161.0" width="4" height="1" fill="#bdbdbd"/><rect x="755" y="161.0" width="4" height="1" fill="#bdbdbd"/>
<rect x="727" y="167.2" width="4" height="1" fill="#bdbdbd"/><rect x="755" y="167.2" width="4" height="1" fill="#bdbdbd"/>
<rect x="727" y="173.3" width="4" height="1" fill="#bdbdbd"/><rect x="755" y="173.3" width="4" height="1" fill="#bdbdbd"/>
<rect x="727" y="179.5" width="4" height="1" fill="#bdbdbd"/><rect x="755" y="179.5" width="4" height="1" fill="#bdbdbd"/>
<rect x="727" y="185.6" width="4" height="1" fill="#bdbdbd"/><rect x="755" y="185.6" width="4" height="1" fill="#bdbdbd"/>
<rect x="732.5" y="181.5" width="20" height="9" rx="1.6" fill="url(#thv)" stroke="#6a6a6a" stroke-width="1"/><rect x="733.5" y="182.5" width="18" height="7" rx="1" fill="none" stroke="#fff" stroke-opacity=".7" stroke-width="1"/>
<text xml:space="preserve" x="724.30" y="216.00" font-family="Liberation Sans" font-size="12.2" fill="#000" font-weight="normal" text-anchor="start" textLength="42.00" lengthAdjust="spacingAndGlyphs" >Contrast</text>
<rect x="741" y="231" width="1" height="72" fill="#a8a8a8"/><rect x="742" y="231" width="1.3" height="72" fill="#fff"/><rect x="743.3" y="231" width="0.7" height="72" fill="#d8d8d8"/>
<rect x="727" y="236.4" width="4" height="1" fill="#bdbdbd"/><rect x="755" y="236.4" width="4" height="1" fill="#bdbdbd"/>
<rect x="727" y="244.1" width="4" height="1" fill="#bdbdbd"/><rect x="755" y="244.1" width="4" height="1" fill="#bdbdbd"/>
<rect x="727" y="251.8" width="4" height="1" fill="#bdbdbd"/><rect x="755" y="251.8" width="4" height="1" fill="#bdbdbd"/>
<rect x="727" y="259.5" width="4" height="1" fill="#bdbdbd"/><rect x="755" y="259.5" width="4" height="1" fill="#bdbdbd"/>
<rect x="727" y="267.2" width="4" height="1" fill="#bdbdbd"/><rect x="755" y="267.2" width="4" height="1" fill="#bdbdbd"/>
<rect x="727" y="274.9" width="4" height="1" fill="#bdbdbd"/><rect x="755" y="274.9" width="4" height="1" fill="#bdbdbd"/>
<rect x="727" y="282.6" width="4" height="1" fill="#bdbdbd"/><rect x="755" y="282.6" width="4" height="1" fill="#bdbdbd"/>
<rect x="727" y="290.3" width="4" height="1" fill="#bdbdbd"/><rect x="755" y="290.3" width="4" height="1" fill="#bdbdbd"/>
<rect x="727" y="298.0" width="4" height="1" fill="#bdbdbd"/><rect x="755" y="298.0" width="4" height="1" fill="#bdbdbd"/>
<rect x="732.5" y="274.5" width="20" height="9" rx="1.6" fill="url(#thv)" stroke="#6a6a6a" stroke-width="1"/><rect x="733.5" y="275.5" width="18" height="7" rx="1" fill="none" stroke="#fff" stroke-opacity=".7" stroke-width="1"/>
<text xml:space="preserve" x="728.60" y="328.20" font-family="Liberation Sans" font-size="12.2" fill="#000" font-weight="normal" text-anchor="start" textLength="31.70" lengthAdjust="spacingAndGlyphs" >Range</text>
<rect x="741" y="343" width="1" height="72" fill="#a8a8a8"/><rect x="742" y="343" width="1.3" height="72" fill="#fff"/><rect x="743.3" y="343" width="0.7" height="72" fill="#d8d8d8"/>
<rect x="727" y="348.5" width="4" height="1" fill="#bdbdbd"/><rect x="755" y="348.5" width="4" height="1" fill="#bdbdbd"/>
<rect x="727" y="352.9" width="4" height="1" fill="#bdbdbd"/><rect x="755" y="352.9" width="4" height="1" fill="#bdbdbd"/>
<rect x="727" y="357.3" width="4" height="1" fill="#bdbdbd"/><rect x="755" y="357.3" width="4" height="1" fill="#bdbdbd"/>
<rect x="727" y="361.7" width="4" height="1" fill="#bdbdbd"/><rect x="755" y="361.7" width="4" height="1" fill="#bdbdbd"/>
<rect x="727" y="366.1" width="4" height="1" fill="#bdbdbd"/><rect x="755" y="366.1" width="4" height="1" fill="#bdbdbd"/>
<rect x="727" y="370.5" width="4" height="1" fill="#bdbdbd"/><rect x="755" y="370.5" width="4" height="1" fill="#bdbdbd"/>
<rect x="727" y="374.9" width="4" height="1" fill="#bdbdbd"/><rect x="755" y="374.9" width="4" height="1" fill="#bdbdbd"/>
<rect x="727" y="379.3" width="4" height="1" fill="#bdbdbd"/><rect x="755" y="379.3" width="4" height="1" fill="#bdbdbd"/>
<rect x="727" y="383.7" width="4" height="1" fill="#bdbdbd"/><rect x="755" y="383.7" width="4" height="1" fill="#bdbdbd"/>
<rect x="727" y="388.1" width="4" height="1" fill="#bdbdbd"/><rect x="755" y="388.1" width="4" height="1" fill="#bdbdbd"/>
<rect x="727" y="392.5" width="4" height="1" fill="#bdbdbd"/><rect x="755" y="392.5" width="4" height="1" fill="#bdbdbd"/>
<rect x="727" y="396.9" width="4" height="1" fill="#bdbdbd"/><rect x="755" y="396.9" width="4" height="1" fill="#bdbdbd"/>
<rect x="727" y="401.3" width="4" height="1" fill="#bdbdbd"/><rect x="755" y="401.3" width="4" height="1" fill="#bdbdbd"/>
<rect x="727" y="405.7" width="4" height="1" fill="#bdbdbd"/><rect x="755" y="405.7" width="4" height="1" fill="#bdbdbd"/>
<rect x="727" y="410.1" width="4" height="1" fill="#bdbdbd"/><rect x="755" y="410.1" width="4" height="1" fill="#bdbdbd"/>
<rect x="732.5" y="374.5" width="20" height="9" rx="1.6" fill="url(#thv)" stroke="#6a6a6a" stroke-width="1"/><rect x="733.5" y="375.5" width="18" height="7" rx="1" fill="none" stroke="#fff" stroke-opacity=".7" stroke-width="1"/>
<text xml:space="preserve" x="728.70" y="441.40" font-family="Liberation Sans" font-size="12.2" fill="#000" font-weight="normal" text-anchor="start" textLength="30.60" lengthAdjust="spacingAndGlyphs" >Offset</text>
<rect x="741" y="458" width="1" height="65" fill="#a8a8a8"/><rect x="742" y="458" width="1.3" height="65" fill="#fff"/><rect x="743.3" y="458" width="0.7" height="65" fill="#d8d8d8"/>
<rect x="727" y="463.5" width="4" height="1" fill="#bdbdbd"/><rect x="755" y="463.5" width="4" height="1" fill="#bdbdbd"/>
<rect x="727" y="468.6" width="4" height="1" fill="#bdbdbd"/><rect x="755" y="468.6" width="4" height="1" fill="#bdbdbd"/>
<rect x="727" y="473.8" width="4" height="1" fill="#bdbdbd"/><rect x="755" y="473.8" width="4" height="1" fill="#bdbdbd"/>
<rect x="727" y="478.9" width="4" height="1" fill="#bdbdbd"/><rect x="755" y="478.9" width="4" height="1" fill="#bdbdbd"/>
<rect x="727" y="484.1" width="4" height="1" fill="#bdbdbd"/><rect x="755" y="484.1" width="4" height="1" fill="#bdbdbd"/>
<rect x="727" y="489.2" width="4" height="1" fill="#bdbdbd"/><rect x="755" y="489.2" width="4" height="1" fill="#bdbdbd"/>
<rect x="727" y="494.4" width="4" height="1" fill="#bdbdbd"/><rect x="755" y="494.4" width="4" height="1" fill="#bdbdbd"/>
<rect x="727" y="499.6" width="4" height="1" fill="#bdbdbd"/><rect x="755" y="499.6" width="4" height="1" fill="#bdbdbd"/>
<rect x="727" y="504.7" width="4" height="1" fill="#bdbdbd"/><rect x="755" y="504.7" width="4" height="1" fill="#bdbdbd"/>
<rect x="727" y="509.9" width="4" height="1" fill="#bdbdbd"/><rect x="755" y="509.9" width="4" height="1" fill="#bdbdbd"/>
<rect x="727" y="515.0" width="4" height="1" fill="#bdbdbd"/><rect x="755" y="515.0" width="4" height="1" fill="#bdbdbd"/>
<rect x="727" y="520.1" width="4" height="1" fill="#bdbdbd"/><rect x="755" y="520.1" width="4" height="1" fill="#bdbdbd"/>
<rect x="727" y="525.3" width="4" height="1" fill="#bdbdbd"/><rect x="755" y="525.3" width="4" height="1" fill="#bdbdbd"/>
<rect x="732.5" y="520.5" width="20" height="9" rx="1.6" fill="url(#thv)" stroke="#6a6a6a" stroke-width="1"/><rect x="733.5" y="521.5" width="18" height="7" rx="1" fill="none" stroke="#fff" stroke-opacity=".7" stroke-width="1"/>
<rect x="778.3" y="542.4" width="1" height="1" fill="#b8b8b8"/>
<rect x="775" y="545.7" width="1" height="1" fill="#b8b8b8"/>
<rect x="778.3" y="545.7" width="1" height="1" fill="#b8b8b8"/>
<rect x="771.7" y="549" width="1" height="1" fill="#b8b8b8"/>
<rect x="775" y="549" width="1" height="1" fill="#b8b8b8"/>
<rect x="778.3" y="549" width="1" height="1" fill="#b8b8b8"/>
</svg></div></body></html>
